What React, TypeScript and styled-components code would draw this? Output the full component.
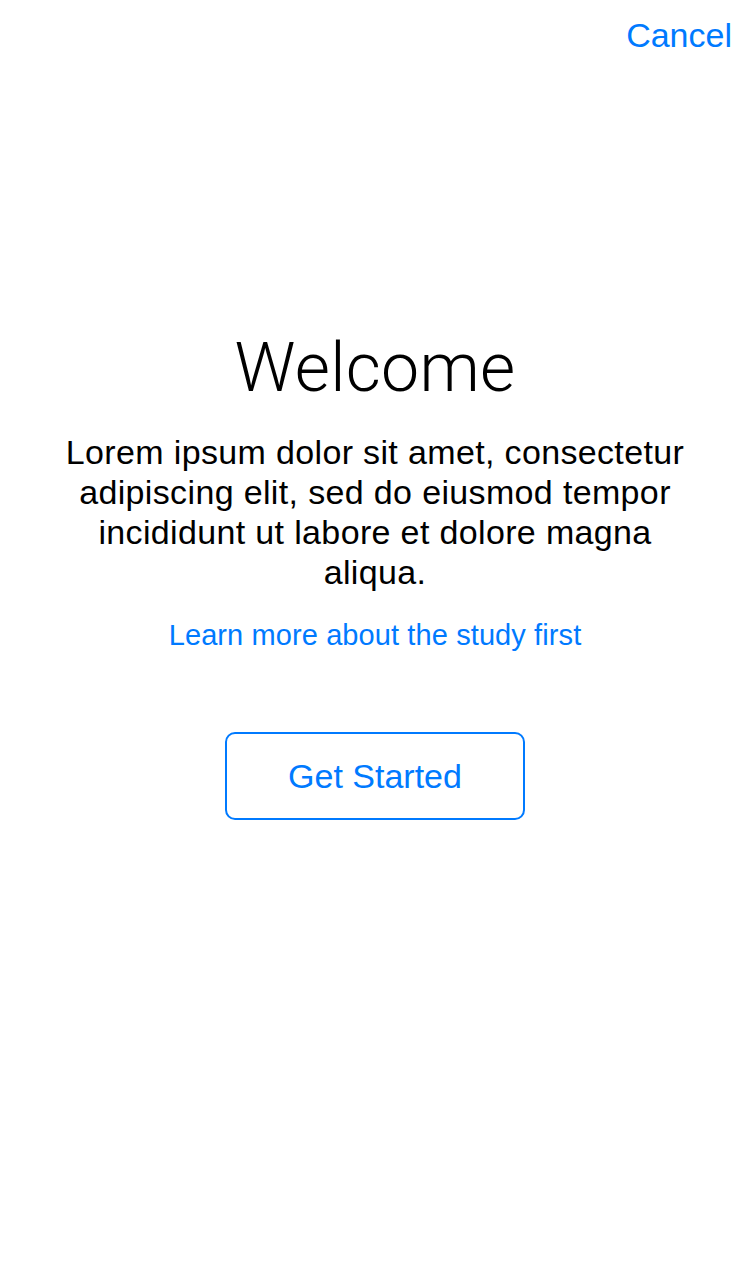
import React from "react";
import styled, { createGlobalStyle } from "styled-components";

const GlobalStyle = createGlobalStyle`
  html, body {
    margin: 0;
    padding: 0;
    background: #ffffff;
  }
  body {
    font-family: "Liberation Sans", Arial, Helvetica, sans-serif;
    -webkit-font-smoothing: antialiased;
  }
`;

const BLUE = "#007AFF";

const Screen = styled.div`
  width: 750px;
  height: 1285px;
  background: #ffffff;
  display: flex;
  flex-direction: column;
`;

const NavBar = styled.div`
  display: flex;
  justify-content: flex-end;
  padding: 15px 18px 0 0;
`;

const NavButton = styled.button`
  border: none;
  background: none;
  padding: 0;
  margin: 0;
  font-family: "Liberation Sans", Arial, sans-serif;
  font-size: 34px;
  line-height: 40px;
  color: ${BLUE};
  cursor: pointer;
`;

const Content = styled.main`
  display: flex;
  flex-direction: column;
  align-items: center;
  padding-top: 273px;
`;

const Title = styled.h1`
  margin: 0;
  font-family: Roboto, "Liberation Sans", sans-serif;
  font-weight: 300;
  font-size: 68px;
  letter-spacing: 0.3px;
  line-height: 80px;
  color: #000000;
`;

const Body = styled.p`
  margin: 24px 0 0;
  width: 630px;
  text-align: center;
  font-family: "Liberation Sans", Arial, sans-serif;
  font-size: 34px;
  letter-spacing: 0.35px;
  line-height: 40px;
  color: #000000;
`;

const Link = styled.a`
  margin-top: 26px;
  font-family: "Liberation Sans", Arial, sans-serif;
  font-size: 29px;
  letter-spacing: 0.1px;
  line-height: 34px;
  color: ${BLUE};
  text-decoration: none;
  cursor: pointer;
`;

const OutlineButton = styled.button`
  margin-top: 80px;
  box-sizing: border-box;
  width: 300px;
  height: 88px;
  border: 2px solid ${BLUE};
  border-radius: 10px;
  background: #ffffff;
  font-family: "Liberation Sans", Arial, sans-serif;
  font-size: 34px;
  line-height: 40px;
  color: ${BLUE};
  padding: 0;
  cursor: pointer;
`;

export default function App() {
  return (
    <>
      <GlobalStyle />
      <Screen>
        <NavBar>
          <NavButton>Cancel</NavButton>
        </NavBar>
        <Content>
          <Title>Welcome</Title>
          <Body>
            Lorem ipsum dolor sit amet, consectetur adipiscing elit, sed do
            eiusmod tempor incididunt ut labore et dolore magna aliqua.
          </Body>
          <Link>Learn more about the study first</Link>
          <OutlineButton>Get Started</OutlineButton>
        </Content>
      </Screen>
    </>
  );
}
